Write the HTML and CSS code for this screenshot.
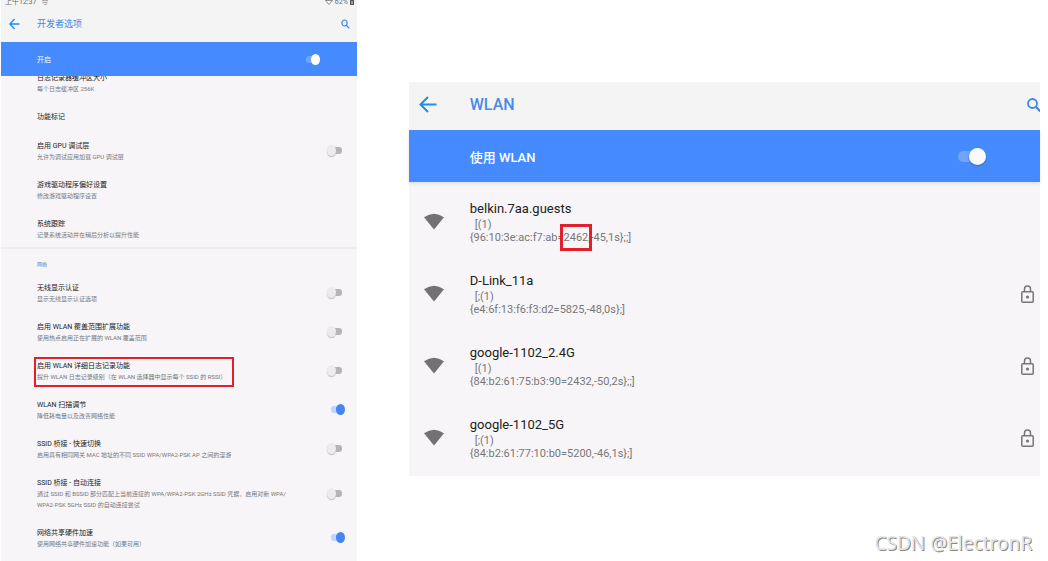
FILE: index.html
```html
<!DOCTYPE html>
<html lang="zh-CN">
<head>
<meta charset="utf-8">
<title>开发者选项 - WLAN</title>
<link rel="stylesheet" href="styles.css">
</head>
<body>
<main class="page">
  <section class="dev" aria-label="开发者选项">
    <header class="dev-header">
      <div class="status">
        <span>上午12:37</span>
        <svg class="status-cast" width="8" height="6" viewBox="0 0 8 6"><path d="M1 1q3-2 6 0M1.500 3q2.500-1.500 5 0M3.500 4.500h2" stroke="#999" fill="none"/></svg>
        <span class="status-right">
          <svg width="8" height="6" viewBox="0 0 8 6"><path d="M.5 .5h7L4 4.500z" stroke="#777" stroke-width=".8" fill="none"/></svg>
          <span>62%</span>
          <svg width="4" height="6" viewBox="0 0 4 6"><path d="M0 0h4v5H0z" fill="#555"/><path d="M2 1v3" stroke="#ddd"/></svg>
        </span>
      </div>
      <div class="dev-title">
        <button class="icon-button dev-back" aria-label="返回"><svg width="11" height="12" viewBox="0 0 11 12"><path d="M10.500 6H1M5.500 1L1 6l4.500 5" fill="none" stroke="#1a8fee" stroke-width="1.400"/></svg></button>
        <h1>开发者选项</h1>
        <button class="icon-button" aria-label="搜索"><svg width="9" height="10" viewBox="0 0 9 10"><ellipse cx="3.500" cy="4" rx="2.600" ry="3" fill="none" stroke="#4285f0" stroke-width="1.200"/><path d="M5.300 6.200L8.300 9.400" stroke="#4285f0" stroke-width="1.300"/></svg></button>
      </div>
    </header>
    <label class="dev-bar"><span>开启</span><input class="switch switch-bar" type="checkbox" checked></label>
    <div class="dev-list">
      <div class="item item-cut"><div class="item-text"><h2>日志记录器缓冲区大小</h2><p>每个日志缓冲区 256K</p></div></div>
      <div class="item"><div class="item-text"><h2>功能标记</h2></div></div>
      <label class="item"><span class="item-text"><strong>启用 GPU 调试层</strong><small>允许为调试应用加载 GPU 调试层</small></span><input class="switch" type="checkbox"></label>
      <div class="item"><div class="item-text"><h2>游戏驱动程序偏好设置</h2><p>修改游戏驱动程序设置</p></div></div>
      <div class="item item-last"><div class="item-text"><h2>系统跟踪</h2><p>记录系统活动并在稍后分析以提升性能</p></div></div>
      <h3 class="category">网络</h3>
      <label class="item"><span class="item-text"><strong>无线显示认证</strong><small>显示无线显示认证选项</small></span><input class="switch" type="checkbox"></label>
      <label class="item"><span class="item-text"><strong>启用 WLAN 覆盖范围扩展功能</strong><small>使用热点启用正在扩展的 WLAN 覆盖范围</small></span><input class="switch" type="checkbox"></label>
      <label class="item"><span class="item-text marked"><strong>启用 WLAN 详细日志记录功能</strong><small>提升 WLAN 日志记录级别（在 WLAN 选择器中显示每个 SSID 的 RSSI）</small></span><input class="switch" type="checkbox"></label>
      <label class="item"><span class="item-text"><strong>WLAN 扫描调节</strong><small>降低耗电量以及改善网络性能</small></span><input class="switch" type="checkbox" checked></label>
      <label class="item"><span class="item-text"><strong>SSID 桥接 - 快速切换</strong><small>启用具有相同网关 MAC 地址的不同 SSID WPA/WPA2-PSK AP 之间的漫游</small></span><input class="switch" type="checkbox"></label>
      <label class="item"><span class="item-text"><strong>SSID 桥接 - 自动连接</strong><small>通过 SSID 和 BSSID 部分匹配上当前连接的 WPA/WPA2-PSK 2GHz SSID 凭据，启用对新 WPA/<br>WPA2-PSK 5GHz SSID 的自动连接尝试</small></span><input class="switch" type="checkbox"></label>
      <label class="item"><span class="item-text"><strong>网络共享硬件加速</strong><small>使用网络共享硬件加速功能（如果可用）</small></span><input class="switch" type="checkbox" checked></label>
    </div>
  </section>

  <div class="side">
    <section class="wlan" aria-label="WLAN">
      <header class="wlan-header">
        <button class="icon-button wlan-back" aria-label="返回"><svg width="18" height="17" viewBox="0 0 18 17"><path d="M17.500 8.500H2M9 1L1.500 8.500 9 16" fill="none" stroke="#1a8fee" stroke-width="2"/></svg></button>
        <h1>WLAN</h1>
        <button class="icon-button" aria-label="搜索"><svg width="13" height="14" viewBox="0 0 13 14"><circle cx="5.500" cy="5.500" r="4.500" fill="none" stroke="#4285e4" stroke-width="1.800"/><path d="M8.700 8.700L13.500 13.500" stroke="#4285e4" stroke-width="2.200"/></svg></button>
      </header>
      <label class="wlan-bar"><span>使用 WLAN</span><input class="switch switch-large" type="checkbox" checked></label>
      <ul class="networks">
        <li>
          <svg class="wifi" width="20" height="17" viewBox="0 0 20 17"><path d="M0 4.200Q10-2.800 20 4.200L10 16.500z" fill="#727272"/></svg>
          <div class="network-text"><h2>belkin.7aa.guests</h2><p class="score">[(1)</p><p>{96:10:3e:ac:f7:ab=<span class="freq">2462</span>,-45,1s};;]</p></div>
        </li>
        <li>
          <svg class="wifi" width="20" height="17" viewBox="0 0 20 17"><path d="M0 4.200Q10-2.800 20 4.200L10 16.500z" fill="#727272"/></svg>
          <div class="network-text"><h2>D-Link_11a</h2><p class="score">[;(1)</p><p>{e4:6f:13:f6:f3:d2=5825,-48,0s};]</p></div>
          <svg class="lock" width="13" height="18" viewBox="0 0 13 18"><rect x=".8" y="6.800" width="11.400" height="10.400" rx="1" fill="none" stroke="#777" stroke-width="1.500"/><path d="M3.500 6.500V4a3 3 0 0 1 6 0v2.500" fill="none" stroke="#777" stroke-width="1.500"/><circle cx="6.500" cy="12" r="1.600" fill="#777"/></svg>
        </li>
        <li>
          <svg class="wifi" width="20" height="17" viewBox="0 0 20 17"><path d="M0 4.200Q10-2.800 20 4.200L10 16.500z" fill="#727272"/></svg>
          <div class="network-text"><h2>google-1102_2.4G</h2><p class="score">[(1)</p><p>{84:b2:61:75:b3:90=2432,-50,2s};;]</p></div>
          <svg class="lock" width="13" height="18" viewBox="0 0 13 18"><rect x=".8" y="6.800" width="11.400" height="10.400" rx="1" fill="none" stroke="#777" stroke-width="1.500"/><path d="M3.500 6.500V4a3 3 0 0 1 6 0v2.500" fill="none" stroke="#777" stroke-width="1.500"/><circle cx="6.500" cy="12" r="1.600" fill="#777"/></svg>
        </li>
        <li>
          <svg class="wifi" width="20" height="17" viewBox="0 0 20 17"><path d="M0 4.200Q10-2.800 20 4.200L10 16.500z" fill="#727272"/></svg>
          <div class="network-text"><h2>google-1102_5G</h2><p class="score">[;(1)</p><p>{84:b2:61:77:10:b0=5200,-46,1s};]</p></div>
          <svg class="lock" width="13" height="18" viewBox="0 0 13 18"><rect x=".8" y="6.800" width="11.400" height="10.400" rx="1" fill="none" stroke="#777" stroke-width="1.500"/><path d="M3.500 6.500V4a3 3 0 0 1 6 0v2.500" fill="none" stroke="#777" stroke-width="1.500"/><circle cx="6.500" cy="12" r="1.600" fill="#777"/></svg>
        </li>
      </ul>
    </section>
    <footer class="credit">CSDN @ElectronR</footer>
  </div>
</main>
</body>
</html>
```
FILE: styles.css
```css
* { box-sizing: border-box; }
body {
  margin: 0;
  background: #fff;
  font-family: Roboto, "Noto Sans CJK SC", sans-serif;
  color: #333;
}
h1, h2, h3, p, ul { margin: 0; padding: 0; font-weight: 400; }
svg { display: block; flex: none; }
.page {
  display: flex;
  gap: 5%;
  min-height: 100vh;
  padding: 0 8px 0 1px;
}
.icon-button {
  display: flex;
  padding: 0;
  border: 0;
  background: none;
}

/* Switches */
.switch {
  appearance: none;
  position: relative;
  flex: none;
  width: 18px;
  height: 12px;
  margin: 0 12px 3px 0;
}
.switch::before, .switch::after {
  content: "";
  position: absolute;
}
.switch::before {
  left: 4px;
  top: 3px;
  width: 11px;
  height: 7px;
  border-radius: 3px;
  background: #b5b4b5;
}
.switch::after {
  left: 0;
  top: 1px;
  width: 9px;
  height: 11px;
  border-radius: 50%;
  background: #ececec;
  box-shadow: 0 1px 1px #bbb;
}
.switch:checked::before { background: #c0d5fa; }
.switch:checked::after {
  left: 9px;
  background: #4285f4;
  box-shadow: none;
}
.switch-bar { margin: 0 37px 0 0; }
.switch-bar:checked::before { background: #6fa5ff; }
.switch-bar:checked::after { background: #fff; }

/* Developer options */
.dev {
  flex: 0 0 34.25%;
  background: #f7f5f7;
}
.dev-header { height: 42px; background: #f4f4f4; }
.status {
  display: flex;
  align-items: flex-end;
  height: 6px;
  padding: 0 3px 0 4px;
  font-size: 7px;
  line-height: 8px;
  color: #666;
}
.status-cast { margin-left: 5px; }
.status-right {
  display: flex;
  align-items: flex-end;
  gap: 2px;
  margin-left: auto;
}
.dev-title {
  display: flex;
  align-items: center;
  height: 36px;
  padding: 0 7px 0 8px;
}
.dev-title h1 {
  flex: 1;
  font-size: 9px;
  line-height: 14px;
  color: #4285e4;
}
.dev-back { width: 28px; }
.dev-bar {
  display: flex;
  align-items: center;
  justify-content: space-between;
  height: 34px;
  padding-left: 36px;
  background: #458bff;
  font-size: 7px;
  color: #fff;
}
.dev-list { overflow: hidden; }
.item {
  display: flex;
  align-items: center;
  justify-content: space-between;
  padding: 9px 0 9px 36px;
}
.item-cut { margin-top: -12px; }
.item-last {
  padding-bottom: 7px;
  border-bottom: 2px solid #ececee;
}
.item-text { position: relative; white-space: nowrap; }
.item h2, .item strong {
  display: block;
  font-size: 7px;
  font-weight: 400;
  line-height: 11px;
  color: #222;
}
.item p, .item small {
  display: block;
  margin-top: -1px;
  font-size: 6px;
  line-height: 11px;
  color: #777;
}
.marked::after {
  content: "";
  position: absolute;
  inset: -4px -8px -5px -3px;
  border: 2px solid #e2202c;
}
.category {
  padding: 10px 0 4px 36px;
  font-size: 5px;
  line-height: 11px;
  color: #3f8fd8;
}

/* WLAN */
.side {
  display: flex;
  flex: 1;
  flex-direction: column;
  justify-content: space-between;
  padding-top: 82px;
}
.wlan { background: #f7f5f7; }
.wlan-header {
  display: flex;
  align-items: center;
  height: 48px;
  padding: 0 0 3px 10px;
  background: #f4f4f4;
}
.wlan-back { width: 51px; }
.wlan-header h1 {
  flex: 1;
  font-size: 16px;
  font-weight: 500;
  line-height: 20px;
  color: #4a8ae6;
}
.wlan-bar {
  display: flex;
  align-items: center;
  justify-content: space-between;
  height: 52px;
  padding: 0 54px 0 61px;
  background: #458bff;
  box-shadow: 0 2px 3px #dde3e8;
  font-size: 13px;
  font-weight: 500;
  color: #fff;
}
.switch-large {
  width: 28px;
  height: 18px;
  margin: 0;
}
.switch-large:checked::before {
  left: 0;
  top: 4px;
  width: 24px;
  height: 11px;
  border-radius: 6px;
  background: #6fa5ff;
}
.switch-large:checked::after {
  left: 11px;
  width: 17px;
  height: 17px;
  background: #fafafa;
  box-shadow: 0 1px 2px #3269c6;
}
.networks { padding: 3px 0; list-style: none; }
.networks li {
  display: flex;
  align-items: center;
  padding: 14px 6px 13px 15px;
}
.network-text { flex: 1; margin-left: 26px; }
.networks h2 {
  font-size: 13px;
  line-height: 19px;
  color: #222;
}
.networks p {
  font-size: 11px;
  line-height: 13px;
  color: #777;
}
.networks .score { padding-left: 5px; }
.freq { position: relative; }
.freq::after {
  content: "";
  position: absolute;
  inset: -7px -4px;
  border: 3px solid #e2202c;
}
.credit {
  padding: 0 8px 5px;
  font-family: "Noto Sans", sans-serif;
  font-size: 19px;
  line-height: 26px;
  text-align: right;
  color: #e4e4e4;
  text-shadow: 1px 1px 0 #888;
}
```
